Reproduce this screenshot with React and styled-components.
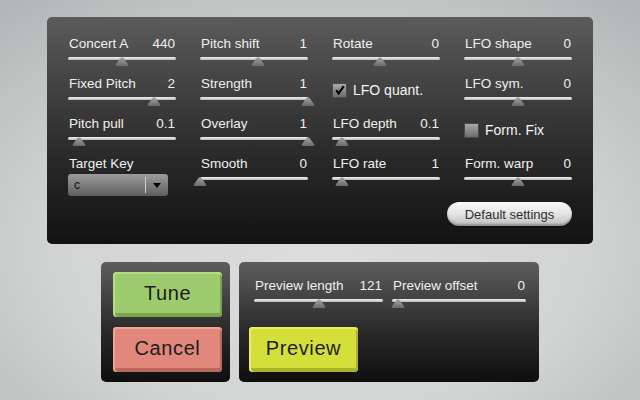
import React from 'react';
import styled, { createGlobalStyle } from 'styled-components';

const GlobalStyle = createGlobalStyle`
  html, body {
    margin: 0;
    padding: 0;
  }
  body {
    font-family: "Liberation Sans", Arial, sans-serif;
  }
  #root {
    width: 640px;
    height: 400px;
    overflow: hidden;
  }
`;

const Thumb = () => (
  <svg width="14" height="9" viewBox="0 0 14 9">
    <defs>
      <linearGradient id="thumbGrad" x1="0" y1="0" x2="0" y2="1">
        <stop offset="0" stopColor="#a4a4a4" />
        <stop offset="1" stopColor="#6a6a6a" />
      </linearGradient>
    </defs>
    <path d="M5.6 0.8 Q7 -0.4 8.4 0.8 L13.2 7.4 Q14 9 12 9 L2 9 Q0 9 0.8 7.4 Z" fill="url(#thumbGrad)" />
  </svg>
);

const Slider = ({ label, value, pos, width = 108 }) => (
  <SliderCell style={{ width }}>
    <LabelRow>
      <span>{label}</span>
      <span>{value}</span>
    </LabelRow>
    <Track>
      <ThumbHolder style={{ left: `${pos * 100}%` }}>
        <Thumb />
      </ThumbHolder>
    </Track>
  </SliderCell>
);

const CheckMark = () => (
  <svg width="10" height="10" viewBox="0 0 10 10">
    <path d="M1.2 5.2 L3.6 8.4 L8.8 1.2" fill="none" stroke="#000" strokeWidth="2.2" strokeLinejoin="miter" />
  </svg>
);

const Check = ({ label, checked }) => (
  <CheckCell>
    <Box>{checked && <CheckMark />}</Box>
    <CheckLabel>{label}</CheckLabel>
  </CheckCell>
);

export default function App() {
  return (
    <Page>
      <GlobalStyle />
      <MainPanel>
        <Slider label="Concert A" value="440" pos={0.5} />
        <Slider label="Pitch shift" value="1" pos={0.54} />
        <Slider label="Rotate" value="0" pos={0.44} />
        <Slider label="LFO shape" value="0" pos={0.5} />

        <Slider label="Fixed Pitch" value="2" pos={0.8} />
        <Slider label="Strength" value="1" pos={1} />
        <Check label="LFO quant." checked />
        <Slider label="LFO sym." value="0" pos={0.5} />

        <Slider label="Pitch pull" value="0.1" pos={0.1} />
        <Slider label="Overlay" value="1" pos={1} />
        <Slider label="LFO depth" value="0.1" pos={0.09} />
        <Check label="Form. Fix" />

        <SliderCell>
          <LabelRow>
            <span>Target Key</span>
          </LabelRow>
          <Select>
            <SelectText>c</SelectText>
            <SelectArrow>
              <svg width="8" height="5" viewBox="0 0 8 5">
                <path d="M0 0 L8 0 L4 5 Z" fill="#000" />
              </svg>
            </SelectArrow>
          </Select>
        </SliderCell>
        <Slider label="Smooth" value="0" pos={0} />
        <Slider label="LFO rate" value="1" pos={0.09} />
        <Slider label="Form. warp" value="0" pos={0.5} />

        <DefaultButton>Default settings</DefaultButton>
      </MainPanel>

      <BottomRow>
        <ActionPanel>
          <BigButton $tone="green">Tune</BigButton>
          <BigButton $tone="red">Cancel</BigButton>
        </ActionPanel>
        <PreviewPanel>
          <PreviewSliders>
            <Slider label="Preview length" value="121" pos={0.5} width={129} />
            <Slider label="Preview offset" value="0" pos={0.045} width={134} />
          </PreviewSliders>
          <BigButton $tone="yellow">Preview</BigButton>
        </PreviewPanel>
      </BottomRow>
    </Page>
  );
}

const tones = {
  green: { bg: '#9fcb6f', top: '#b6dc8a', bottom: '#79a54d' },
  red: { bg: '#e1877b', top: '#f0a498', bottom: '#b9665b' },
  yellow: { bg: '#d4df3a', top: '#e6ef62', bottom: '#a9b42a' },
};

const Page = styled.div`
  width: 640px;
  height: 400px;
  box-sizing: border-box;
  padding-top: 17px;
  background:
    radial-gradient(ellipse 75% 80% at 50% 62%, #dcdede 0%, #d2d4d4 55%, #b3b6b6 100%);
  display: flex;
  flex-direction: column;
  align-items: center;
`;

const MainPanel = styled.div`
  position: relative;
  width: 546px;
  box-sizing: border-box;
  padding: 19px 0 18px 21px;
  border-radius: 5px;
  background: linear-gradient(to bottom, #5b5b5b 0%, #2e2e2e 55%, #121212 100%);
  display: grid;
  grid-template-columns: repeat(4, 108px);
  grid-template-rows: repeat(4, 40px) auto;
  column-gap: 24px;

  &::after {
    content: '';
    position: absolute;
    left: 110px;
    right: 150px;
    bottom: -4px;
    height: 6px;
    border-radius: 50%;
    box-shadow: 0 6px 10px rgba(0, 0, 0, 0.28);
    z-index: -1;
  }
`;

const SliderCell = styled.div`
  width: 108px;
  display: flex;
  flex-direction: column;
`;

const LabelRow = styled.div`
  display: flex;
  justify-content: space-between;
  height: 16px;
  line-height: 16px;
  font-size: 13.5px;
  color: #f0f0f0;
  padding: 0 1px 0 1px;
  white-space: nowrap;
`;

const Track = styled.div`
  position: relative;
  margin-top: 5px;
  height: 3px;
  border-radius: 2px;
  background: linear-gradient(to bottom, #f2f2f2, #b8b8b8);
`;

const ThumbHolder = styled.div`
  position: absolute;
  top: 0;
  width: 14px;
  height: 9px;
  margin-left: -7px;
  line-height: 0;
`;

const CheckCell = styled.div`
  display: flex;
  align-items: center;
  gap: 6px;
  padding-top: 6px;
  height: 16px;
`;

const Box = styled.div`
  width: 13px;
  height: 13px;
  border: 1px solid #4a4a4a;
  background: linear-gradient(to bottom, #a8a8a8, #6c6c6c);
  display: flex;
  align-items: center;
  justify-content: center;
`;

const CheckLabel = styled.span`
  font-size: 14px;
  color: #f4f4f4;
`;

const Select = styled.div`
  margin-top: 2px;
  width: 100px;
  height: 22px;
  box-sizing: border-box;
  border-radius: 3px;
  background: linear-gradient(to bottom, #9c9c9c, #5e5e5e);
  display: flex;
  align-items: center;
`;

const SelectText = styled.span`
  flex: 1;
  padding-left: 6px;
  font-size: 12px;
  color: #111;
`;

const SelectArrow = styled.div`
  width: 22px;
  height: 16px;
  border-left: 1px solid #cfcfcf;
  display: flex;
  align-items: center;
  justify-content: center;
`;

const DefaultButton = styled.div`
  grid-column: 3 / 5;
  justify-self: end;
  margin-top: 6px;
  width: 125px;
  height: 24px;
  box-sizing: border-box;
  border-radius: 12px;
  background: linear-gradient(to bottom, #fafafa 0%, #e4e4e4 50%, #bdbdbd 100%);
  box-shadow: inset 0 -2px 2px rgba(0, 0, 0, 0.25), 0 1px 1px rgba(0, 0, 0, 0.5);
  font-size: 13px;
  color: #2e2e2e;
  display: flex;
  align-items: center;
  justify-content: center;
`;

const BottomRow = styled.div`
  display: flex;
  gap: 9px;
  margin-top: 18px;
`;

const DarkPanel = styled.div`
  height: 120px;
  box-sizing: border-box;
  border-radius: 5px;
  background: linear-gradient(to bottom, #5d5d5d 0%, #2c2c2c 55%, #0e0e0e 100%);
`;

const ActionPanel = styled(DarkPanel)`
  width: 129px;
  padding: 10px 12px;
  display: flex;
  flex-direction: column;
  gap: 10px;
`;

const PreviewPanel = styled(DarkPanel)`
  width: 300px;
  padding: 16px 10px 10px 10px;
  display: flex;
  flex-direction: column;
  justify-content: space-between;
`;

const PreviewSliders = styled.div`
  display: flex;
  gap: 9px;
  padding-left: 5px;
`;

const BigButton = styled.div`
  width: 109px;
  height: 45px;
  box-sizing: border-box;
  border-radius: 4px;
  background: ${({ $tone }) => tones[$tone].bg};
  box-shadow:
    inset 0 2px 0 ${({ $tone }) => tones[$tone].top},
    inset 2px 0 0 ${({ $tone }) => tones[$tone].top},
    inset 0 -4px 0 ${({ $tone }) => tones[$tone].bottom},
    inset -2px 0 0 ${({ $tone }) => tones[$tone].bottom};
  font-size: 20px;
  letter-spacing: 0.6px;
  color: #1d1d1d;
  display: flex;
  align-items: center;
  justify-content: center;
  padding-bottom: 2px;
`;
